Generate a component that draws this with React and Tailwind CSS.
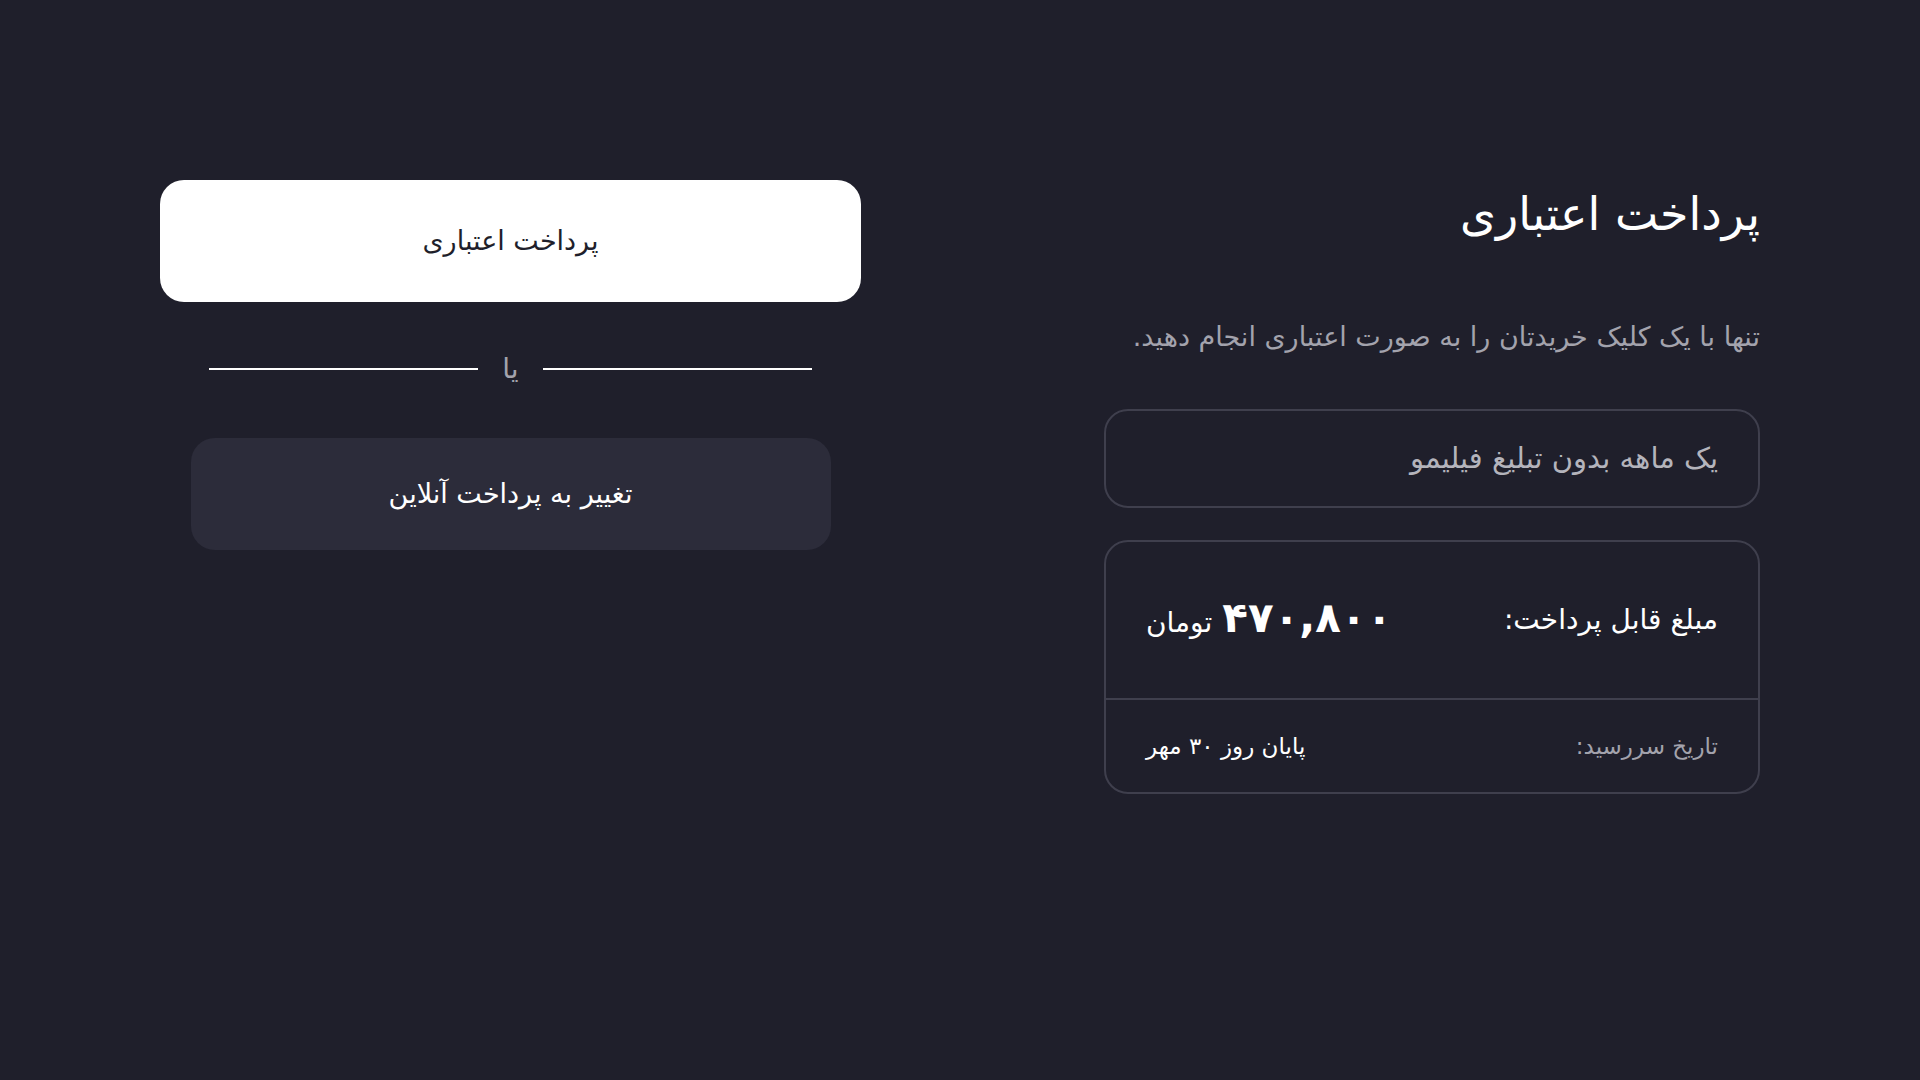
export default function App() {
  return (
    <div
      dir="rtl"
      className="min-h-screen w-full bg-[#1f1f2b] text-white"
      style={{ fontFamily: '"DejaVu Sans", "Noto Sans", sans-serif' }}
    >
      <div className="flex justify-between px-[160px] pt-[180px]">
        {/* ستون اطلاعات */}
        <div className="flex w-[656px] flex-col">
          <h1 className="mt-[4px] text-[46px] font-normal leading-[60px] text-white">پرداخت اعتباری</h1>
          <p className="mt-[75px] text-[27px] leading-[36px] text-[#a3a3ad]">
            تنها با یک کلیک خریدتان را به صورت اعتباری انجام دهید.
          </p>

          <div className="mt-[54px] flex h-[99px] items-center rounded-[24px] border-2 border-[#3f3f4d] px-[40px]">
            <span className="text-[29px] text-[#b4b4bc]">یک ماهه بدون تبلیغ فیلیمو</span>
          </div>

          <div className="mt-[32px] flex flex-col rounded-[24px] border-2 border-[#3f3f4d]">
            <div className="flex h-[156px] items-center justify-between px-[40px]">
              <span className="text-[28px] text-white">مبلغ قابل پرداخت:</span>
              <div className="flex items-baseline gap-[10px]">
                <span className="text-[42px] font-semibold leading-none text-white">۴۷۰,۸۰۰</span>
                <span className="text-[28px] text-white">تومان</span>
              </div>
            </div>
            <div className="h-[2px] bg-[#3f3f4d]" />
            <div className="flex h-[92px] items-center justify-between px-[40px]">
              <span className="text-[23px] text-[#a3a3ad]">تاریخ سررسید:</span>
              <span className="text-[23px] text-white">پایان روز ۳۰ مهر</span>
            </div>
          </div>
        </div>

        {/* ستون دکمه‌ها */}
        <div className="flex w-[701px] flex-col items-center">
          <button className="flex h-[122px] w-full items-center justify-center rounded-[24px] bg-white text-[27px] text-[#1f1f2b]">
            پرداخت اعتباری
          </button>

          <div className="mt-[53px] flex w-[602px] items-center gap-[24px]">
            <div className="h-[2px] flex-1 bg-white" />
            <span className="text-[28px] leading-none text-[#a3a3ad]">یا</span>
            <div className="h-[2px] flex-1 bg-white" />
          </div>

          <button className="mt-[55px] flex h-[112px] w-[640px] items-center justify-center rounded-[24px] bg-[#2c2c3a] text-[27px] text-white">
            تغییر به پرداخت آنلاین
          </button>
        </div>
      </div>
    </div>
  );
}
